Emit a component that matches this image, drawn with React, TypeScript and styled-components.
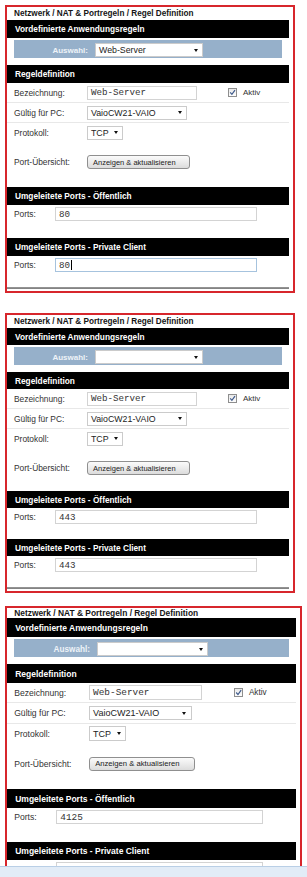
import React from "react";
import styled, { createGlobalStyle } from "styled-components";

const GlobalStyle = createGlobalStyle`
  html, body { margin: 0; padding: 0; background: #fff; }
  body { font-family: "Liberation Sans", Arial, sans-serif; }
`;

const Page = styled.div`
  box-sizing: border-box;
  width: 307px;
  height: 877px;
  overflow: hidden;
  padding: 5px 0 0 5px;
  display: flex;
  flex-direction: column;
`;

// --bar: height of black headings, --sec: tweak of the space above the port sections
const Panel = styled.section<{ $gap: number; $bar: number; $sec: number; $zoom?: number; $cut?: boolean }>`
  --bar: ${(p) => p.$bar}px;
  --sec: ${(p) => p.$sec}px;
  box-sizing: border-box;
  width: 290px;
  flex-shrink: 0;
  margin-top: ${(p) => p.$gap}px;
  zoom: ${(p) => p.$zoom ?? 1};
  border: 2px solid #d7262c;
  border-bottom-width: ${(p) => (p.$cut ? 0 : 2)}px;
  padding: 0 4px 2px 0;
  display: flex;
  flex-direction: column;
  background: #fff;
  color: #333;
  font-size: 8.4px;
  ${(p) => p.$cut && "flex: 1 1 0; min-height: 0; overflow: hidden;"}
`;

const Crumb = styled.div<{ $h: number }>`
  height: ${(p) => p.$h}px;
  display: flex;
  align-items: center;
  padding-left: 7px;
  font-weight: bold;
  font-size: 8.2px;
  color: #161616;
`;

const HeadBar = styled.div<{ $mt?: number }>`
  flex-shrink: 0;
  height: var(--bar);
  margin-top: calc(${(p) => p.$mt ?? 0}px + var(--sec) * ${(p) => (p.$mt ? 1 : 0)});
  background: #000;
  color: #fff;
  font-weight: bold;
  font-size: 8.3px;
  display: flex;
  align-items: center;
  padding-left: 8px;
`;

const PickBar = styled.div`
  flex-shrink: 0;
  height: 18px;
  margin: 2px 7px 7px;
  background: #96b0ca;
  display: flex;
  align-items: center;
  padding-top: 2px;
  box-sizing: border-box;
`;

const PickLabel = styled.span`
  box-sizing: border-box;
  width: 81px;
  padding-right: 7px;
  text-align: right;
  color: #eef3f8;
  font-weight: bold;
  font-size: 8px;
`;

const Select = styled.div<{ $w: number }>`
  box-sizing: border-box;
  width: ${(p) => p.$w}px;
  height: 14px;
  border: 1px solid #cbcbcb;
  background: #fff;
  display: flex;
  align-items: center;
  justify-content: space-between;
  padding: 0 4px 0 3px;
  font-size: 8.8px;
  color: #222;
`;

const Arrow = styled.span`
  width: 0;
  height: 0;
  border-left: 2.5px solid transparent;
  border-right: 2.5px solid transparent;
  border-top: 3px solid #111;
`;

const FieldRow = styled.div<{ $line?: boolean; $h?: number; $mt?: number }>`
  flex-shrink: 0;
  height: ${(p) => p.$h ?? 19}px;
  margin-top: ${(p) => p.$mt ?? 0}px;
  display: flex;
  align-items: center;
  border-bottom: ${(p) => (p.$line ? "1px solid #e8e8e8" : "none")};
`;

const Label = styled.span<{ $w: number }>`
  box-sizing: border-box;
  flex-shrink: 0;
  width: ${(p) => p.$w}px;
  padding-left: 7px;
  color: #333;
`;

const TextBox = styled.div<{ $w: number; $focus?: boolean }>`
  box-sizing: border-box;
  width: ${(p) => p.$w}px;
  height: 14px;
  border: 1px solid ${(p) => (p.$focus ? "#a6c3de" : "#d3d3d3")};
  background: #fff;
  padding-left: 3px;
  display: flex;
  align-items: center;
  font-family: "Liberation Mono", "Courier New", monospace;
  font-size: 9.2px;
  color: #333;
`;

const Caret = styled.span`
  width: 1px;
  height: 10px;
  margin-left: 1px;
  background: #000;
`;

const Active = styled.label`
  display: flex;
  align-items: center;
  gap: 6px;
  margin-left: 31px;
  font-size: 8px;
  color: #333;
`;

const Tick = styled.span`
  box-sizing: border-box;
  width: 9px;
  height: 9px;
  border: 1px solid #8e8e8e;
  background: linear-gradient(#e9e9e9, #fdfdfd);
  display: flex;
  svg { display: block; }
`;

const Button = styled.div`
  box-sizing: border-box;
  width: 103px;
  height: 14px;
  border: 1px solid #8f8f8f;
  border-radius: 3px;
  background: linear-gradient(#fbfbfb, #dcdcdc);
  display: flex;
  align-items: center;
  padding-left: 5px;
  font-size: 7.5px;
  color: #222;
`;

const Rule = styled.div`
  flex-shrink: 0;
  height: 2px;
  margin-top: 13px;
  background: linear-gradient(#9a9a9a, #7c7c7c);
`;

const Strip = styled.div`
  flex-shrink: 0;
  height: 10px;
  margin-left: -5px;
  border-top: 1px solid #b9cfe6;
  background: #e2ecf7;
`;

type RuleData = {
  pick: string;
  port: string;
  caret?: boolean;
};

type Look = {
  gap: number;
  bar: number;
  sec: number;
  crumb: number;
  zoom?: number;
  cut?: boolean;
};

function RulePanel({ data, look }: { data: RuleData; look: Look }) {
  return (
    <Panel $gap={look.gap} $bar={look.bar} $sec={look.sec} $zoom={look.zoom} $cut={look.cut}>
      <Crumb $h={look.crumb}>Netzwerk / NAT &amp; Portregeln / Regel Definition</Crumb>
      <HeadBar>Vordefinierte Anwendungsregeln</HeadBar>
      <PickBar>
        <PickLabel>Auswahl:</PickLabel>
        <Select $w={108}>
          <span>{data.pick}</span>
          <Arrow />
        </Select>
      </PickBar>
      <HeadBar>Regeldefinition</HeadBar>
      <FieldRow $line>
        <Label $w={80}>Bezeichnung:</Label>
        <TextBox $w={110}>Web-Server</TextBox>
        <Active>
          <Tick>
            <svg width="7" height="7" viewBox="0 0 7 7">
              <path d="M1.2 3.4 L2.9 5.4 L6 1.2" stroke="#3f5b8c" strokeWidth="1.2" fill="none" />
            </svg>
          </Tick>
          Aktiv
        </Active>
      </FieldRow>
      <FieldRow $line>
        <Label $w={80}>Gültig für PC:</Label>
        <Select $w={100}>
          <span>VaioCW21-VAIO</span>
          <Arrow />
        </Select>
      </FieldRow>
      <FieldRow>
        <Label $w={80}>Protokoll:</Label>
        <Select $w={36}>
          <span>TCP</span>
          <Arrow />
        </Select>
      </FieldRow>
      <FieldRow $h={14} $mt={13}>
        <Label $w={80}>Port-Übersicht:</Label>
        <Button>Anzeigen &amp; aktualisieren</Button>
      </FieldRow>
      <HeadBar $mt={18}>Umgeleitete Ports - Öffentlich</HeadBar>
      <FieldRow $h={18}>
        <Label $w={48}>Ports:</Label>
        <TextBox $w={202}>{data.port}</TextBox>
      </FieldRow>
      <HeadBar $mt={15}>Umgeleitete Ports - Private Client</HeadBar>
      <FieldRow $h={18}>
        <Label $w={48}>Ports:</Label>
        <TextBox $w={202} $focus={data.caret}>
          {data.port}
          {data.caret && <Caret />}
        </TextBox>
      </FieldRow>
      <Rule />
    </Panel>
  );
}

const shots: { data: RuleData; look: Look }[] = [
  { data: { pick: "Web-Server", port: "80", caret: true }, look: { gap: 0, bar: 18, sec: 0, crumb: 13 } },
  { data: { pick: "", port: "443" }, look: { gap: 20, bar: 17, sec: -2, crumb: 13 } },
  { data: { pick: "", port: "4125" }, look: { gap: 13, bar: 18, sec: 0, crumb: 15, zoom: 1.025, cut: true } },
];

export default function App() {
  return (
    <>
      <GlobalStyle />
      <Page>
        {shots.map((s, i) => (
          <RulePanel key={i} data={s.data} look={s.look} />
        ))}
        <Strip />
      </Page>
    </>
  );
}
